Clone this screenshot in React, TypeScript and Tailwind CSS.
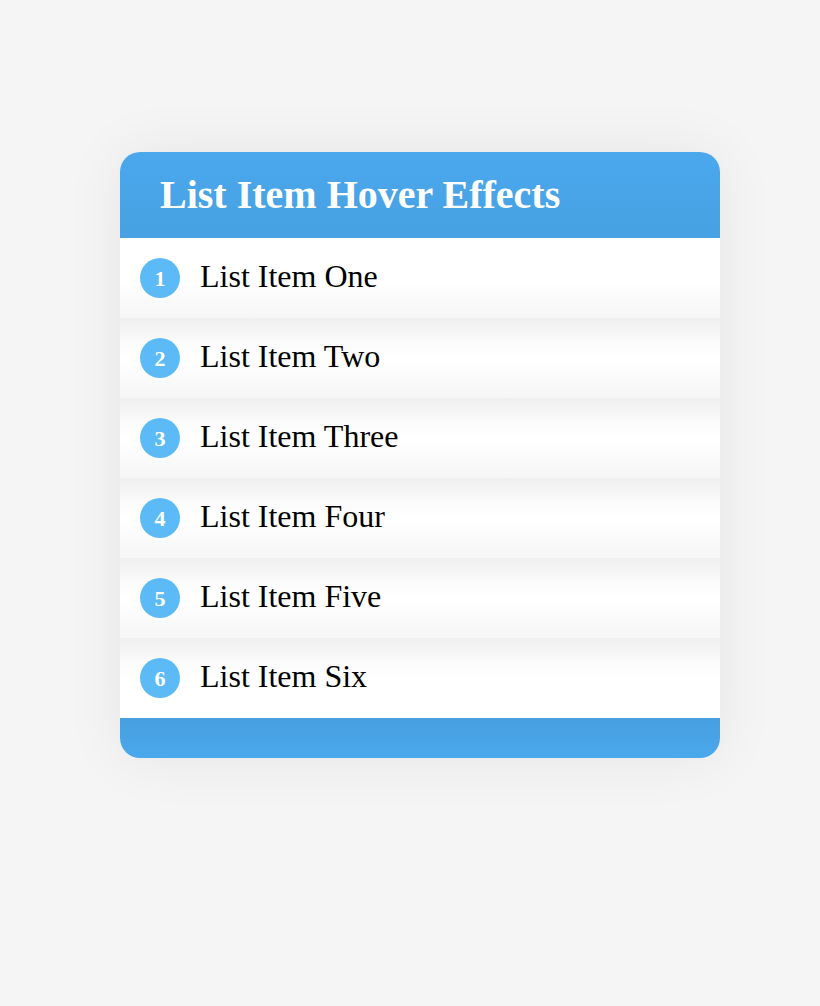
const ITEMS = ['One', 'Two', 'Three', 'Four', 'Five', 'Six'];

export default function App() {
  return (
    <div
      className="min-h-[1006px] w-full bg-[#f5f5f5] pt-[152px]"
      style={{ fontFamily: '"Liberation Serif", "Times New Roman", serif' }}
    >
      <div className="ml-[120px] w-[600px] overflow-hidden rounded-[20px] bg-white shadow-[0_0_60px_rgba(0,0,0,0.07)]">
        {/* Header */}
        <div className="flex h-[86px] items-center bg-gradient-to-b from-[#4ba8ed] to-[#47a1e2] pl-10">
          <h1 className="text-[40px] font-bold leading-none text-white">List Item Hover Effects</h1>
        </div>

        {/* Items */}
        <ul>
          {ITEMS.map((name, i) => {
            const first = i === 0;
            const last = i === ITEMS.length - 1;
            return (
              <li
                key={name}
                className={`flex h-20 items-center gap-5 pl-5 ${
                  first
                    ? 'bg-[linear-gradient(to_bottom,#ffffff_0%,#ffffff_55%,#f6f6f6_100%)]'
                    : last
                    ? 'bg-[linear-gradient(to_bottom,#eeeeee_0%,#fbfbfb_30%,#ffffff_55%,#ffffff_100%)]'
                    : 'bg-[linear-gradient(to_bottom,#eeeeee_0%,#fbfbfb_30%,#ffffff_50%,#f6f6f6_100%)]'
                }`}
              >
                <span className="flex h-10 w-10 items-center justify-center rounded-full bg-[#5cbbf7] pt-px text-[22px] font-bold leading-none text-white">
                  {i + 1}
                </span>
                <span className="-mt-1 text-[32px] leading-none text-black">List Item {name}</span>
              </li>
            );
          })}
        </ul>

        {/* Footer */}
        <div className="h-10 bg-gradient-to-b from-[#479fe0] to-[#4aa8ec]" />
      </div>
    </div>
  );
}
